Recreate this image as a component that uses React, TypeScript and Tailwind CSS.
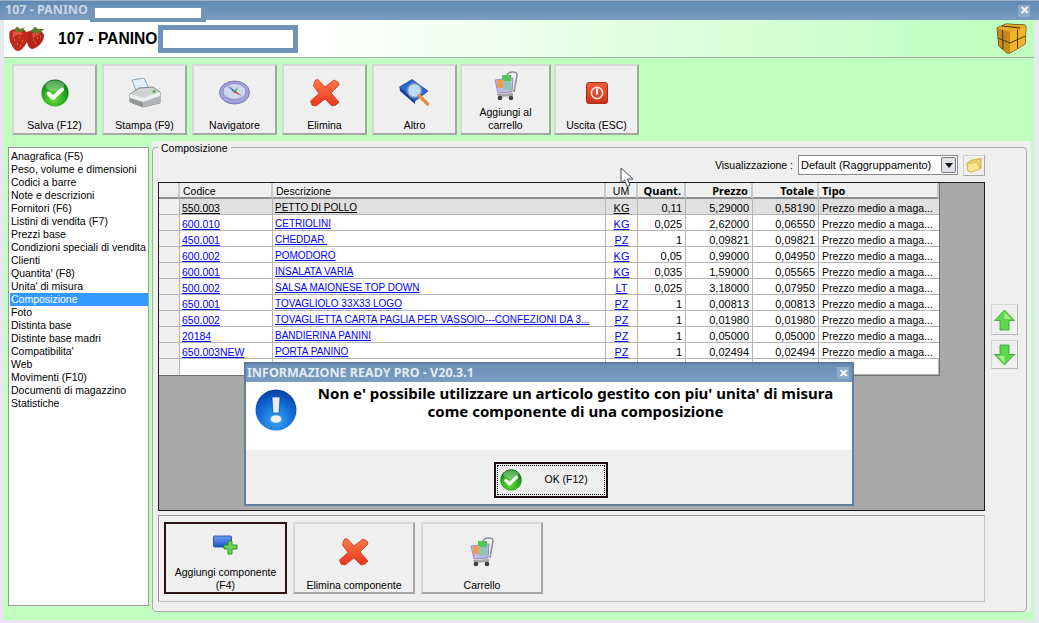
import type { ReactNode } from 'react';

const FONT = "font-['Liberation_Sans',sans-serif]";
const BOLD = "font-['Noto_Sans',sans-serif] font-bold";

/* ── Icons ─────────────────────────────────────────────── */
function CheckIcon({ size = 28, id = 'chk' }: { size?: number; id?: string }) {
  return (
    <svg width={size} height={size} viewBox="0 0 28 28">
      <defs>
        <radialGradient id={id} cx="45%" cy="70%" r="70%">
          <stop offset="0" stopColor="#6fe03c" />
          <stop offset="0.6" stopColor="#27a81e" />
          <stop offset="1" stopColor="#0b6e12" />
        </radialGradient>
      </defs>
      <circle cx="14" cy="14" r="13.6" fill={`url(#${id})`} />
      <ellipse cx="14" cy="7" rx="9.5" ry="5.5" fill="#fff" opacity="0.3" />
      <path d="M7.5 14.5 L12 19 L21 10.5" fill="none" stroke="#fff" strokeWidth="4" strokeLinecap="round" strokeLinejoin="round" />
    </svg>
  );
}

function CrossIcon() {
  return (
    <svg width="30" height="28" viewBox="0 0 30 28">
      <defs>
        <linearGradient id="crs" x1="0" y1="0" x2="0" y2="1">
          <stop offset="0" stopColor="#ff7a4a" />
          <stop offset="1" stopColor="#e8341a" />
        </linearGradient>
      </defs>
      <path d="M5 1.5 L8 0.5 L15 8 L24 1 L28 3 L29 6 L21 14 L29 23 L26 26 L22 27 L15 20 L6 27 L2 26 L0.5 22 L9 14.5 L3.5 7 Z" fill="url(#crs)" stroke="#c9361c" strokeWidth="0.8" strokeLinejoin="round" />
    </svg>
  );
}

function PrinterIcon() {
  return (
    <svg width="32" height="30" viewBox="0 0 32 30">
      <path d="M3 2 L15 0 L21 13 L8 15 Z" fill="#dfeefb" stroke="#7f8d9c" strokeWidth="0.8" />
      <path d="M1 16 L10 10 L24 9 L31 14 L31 25 L14 29 L1 24 Z" fill="#cfd1d2" stroke="#6e7174" strokeWidth="0.8" />
      <path d="M1 16 L14 20 L31 14 L31 18 L14 24 L1 20 Z" fill="#eef0f0" />
      <path d="M1 20 L14 24 L14 29 L1 24 Z" fill="#96999c" />
      <path d="M14 24 L31 18 L31 25 L14 29 Z" fill="#b2b5b7" />
      <circle cx="25" cy="13.5" r="1.4" fill="#4cb83a" />
    </svg>
  );
}

function CompassIcon() {
  return (
    <svg width="31" height="25" viewBox="0 0 31 25">
      <ellipse cx="15.5" cy="12.5" rx="15" ry="11.5" fill="#a4a2dc" stroke="#6c6ca4" strokeWidth="0.8" />
      <ellipse cx="15.5" cy="11.5" rx="11.5" ry="8" fill="#cfd7ef" stroke="#7d7db3" strokeWidth="0.8" />
      <path d="M8 5 L16 10.5 L14 12 Z" fill="#3f7fc9" />
      <path d="M16 10.5 L23 16 L14 12 Z" fill="#d83b2a" />
      <path d="M14 12 L19 7 L17 12 Z" fill="#4aa84a" />
    </svg>
  );
}

function BookIcon() {
  return (
    <svg width="32" height="28" viewBox="0 0 32 28">
      <path d="M0.5 8 L13 0.5 L29 12 L16 22 Z" fill="#2b67d8" stroke="#163f94" strokeWidth="0.7" />
      <path d="M0.5 8 L16 22 L16 25 L1 12 Z" fill="#123f9e" />
      <circle cx="15.5" cy="11.5" r="7" fill="#bcdcf5" stroke="#7d93ad" strokeWidth="1.6" />
      <path d="M20 16.5 L28.5 25" stroke="#e8873d" strokeWidth="3.4" strokeLinecap="round" />
    </svg>
  );
}

function CartIcon() {
  return (
    <svg width="24" height="30" viewBox="0 0 24 30">
      <path d="M13 4 C15 0 23 0 23 4 L20 21" fill="none" stroke="#8e9598" strokeWidth="1.6" />
      <path d="M1 9 L19 7 L18 21 L4 22 Z" fill="#bdb8e6" stroke="#7f7fb0" strokeWidth="0.8" />
      <rect x="8" y="4" width="9" height="9" fill="#53c659" />
      <rect x="3" y="9" width="7" height="8" fill="#ef9a55" />
      <rect x="9" y="10" width="8" height="9" fill="#8fc7b7" />
      <path d="M3 23 L19 22 L19 25 L4 26 Z" fill="#a3a7a9" />
      <circle cx="6" cy="27" r="2.3" fill="#3f4244" />
      <circle cx="17" cy="27" r="2.3" fill="#3f4244" />
    </svg>
  );
}

function PowerIcon() {
  return (
    <svg width="22" height="22" viewBox="0 0 22 22">
      <defs>
        <linearGradient id="pwr" x1="0" y1="0" x2="0" y2="1">
          <stop offset="0" stopColor="#f0603a" />
          <stop offset="1" stopColor="#c8321a" />
        </linearGradient>
      </defs>
      <rect x="0.5" y="0.5" width="21" height="21" rx="2.5" fill="url(#pwr)" stroke="#b02a14" />
      <circle cx="11" cy="11" r="5.6" fill="none" stroke="#fbe3db" strokeWidth="1.6" />
      <rect x="10" y="6.5" width="2" height="6" fill="#fff" />
    </svg>
  );
}

function StrawberryIcon() {
  return (
    <svg width="37" height="25" viewBox="0 0 37 25">
      <path d="M19 6 C26 2 36 4 36 10 C36 17 27 23 24 23 C20 23 17 13 19 6 Z" fill="#b5241a" />
      <path d="M2 5 C8 1 19 2 20 9 C21 16 14 25 10 25 C5 25 -1 12 2 5 Z" fill="#c22a1c" />
      <path d="M5 6 C9 4 14 5 15 9 C11 8 7 9 5 12 Z" fill="#ee6a52" opacity="0.7" />
      <path d="M24 7 C27 6 31 6 33 9 C30 9 27 10 25 13 Z" fill="#e0604a" opacity="0.6" />
      <path d="M6 4 L9 0.5 L12 3 L17 1.5 L14 6 L9 6 Z" fill="#5d7f2a" />
      <path d="M23 5 L27 0.5 L30 3 L36 3 L32 7 L26 7 Z" fill="#56802a" />
      <path d="M6 14h1M11 11h1M14 15h1M9 18h1M12 20h1M25 14h1M29 12h1M27 17h1M32 11h1" stroke="#f0b080" strokeWidth="1" />
    </svg>
  );
}

function CubeIcon() {
  return (
    <svg width="31" height="31" viewBox="0 0 31 31">
      <path d="M1 5 L10 1 L29 2 L30 4 L29 21 L14 30 L11 30 L3 23 Z" fill="#d99a18" stroke="#3d2a06" strokeWidth="1" strokeLinejoin="round" />
      <path d="M1 5 L10 1 L29 2 L30 4 L14 9 Z" fill="#e3a92a" />
      <path d="M14 9 L30 4 L29 21 L14 30 Z" fill="#f0b52c" />
      <path d="M1 5 L14 9 L14 30 L11 30 L3 23 Z" fill="#c98a12" />
      <path d="M2 15 L14 20 L29.5 13 M21.5 6.5 L21.5 25.5 M6.5 7 L7 26 M6 3 L24 5" fill="none" stroke="#4a3208" strokeWidth="1" />
    </svg>
  );
}

function FolderIcon() {
  return (
    <svg width="16" height="15" viewBox="0 0 16 15">
      <path d="M1 5 L6 2 L15 0.5 L15 10 L5 14 L2 13 Z" fill="#f0d267" stroke="#b89a37" strokeWidth="0.7" />
      <path d="M1 6 L11 4 L14 11 L5 14 L2 13 Z" fill="#fbe68f" stroke="#c2a440" strokeWidth="0.6" />
    </svg>
  );
}

function ArrowIcon({ down = false }: { down?: boolean }) {
  return (
    <svg width="21" height="22" viewBox="0 0 21 22" className={down ? 'rotate-180' : ''}>
      <path d="M10.5 1 L20.5 11.5 L15 11.5 L15 21 L6 21 L6 11.5 L0.5 11.5 Z" fill="#5ed84e" stroke="#2f9e2b" strokeWidth="0.8" strokeLinejoin="round" />
      <path d="M10.5 3 L17 10 L10.5 10 Z" fill="#a4f08c" />
    </svg>
  );
}

function InfoIcon() {
  return (
    <svg width="42" height="42" viewBox="0 0 42 42">
      <defs>
        <radialGradient id="inf" cx="50%" cy="75%" r="75%">
          <stop offset="0" stopColor="#38a6f5" />
          <stop offset="0.65" stopColor="#0f63d2" />
          <stop offset="1" stopColor="#0a3d9c" />
        </radialGradient>
      </defs>
      <circle cx="21" cy="21" r="20.5" fill="url(#inf)" />
      <path d="M17 8 L25 8 L24 24 L18 24 Z" fill="#e6eef7" stroke="#0a3d9c" strokeWidth="0.6" />
      <ellipse cx="21" cy="30" rx="5.5" ry="3.8" fill="#eef4fa" />
    </svg>
  );
}

function AddComponentIcon() {
  return (
    <svg width="25" height="20" viewBox="0 0 25 20">
      <defs>
        <linearGradient id="cmp" x1="0" y1="0" x2="0" y2="1">
          <stop offset="0" stopColor="#6d9df0" />
          <stop offset="1" stopColor="#1f55c8" />
        </linearGradient>
      </defs>
      <rect x="0.5" y="1" width="18" height="11" rx="1.2" fill="url(#cmp)" stroke="#153f9a" strokeWidth="0.8" />
      <path d="M15 6 L19 6 L19 10 L24 10 L24 14 L19 14 L19 19 L15 19 L15 14 L11 14 L11 10 L15 10 Z" fill="#6fd34f" stroke="#1f8a22" strokeWidth="0.9" />
    </svg>
  );
}

function CursorIcon() {
  return (
    <svg width="15" height="21" viewBox="0 0 15 21">
      <path d="M1 1 L1 16 L4.5 13 L7 19.5 L10 18.3 L7.5 12 L13 12 Z" fill="#fff" stroke="#3c4a58" strokeWidth="1" strokeLinejoin="round" />
    </svg>
  );
}

/* ── Pieces ────────────────────────────────────────────── */
function ToolButton({ label, icon, className, black = false, tight = false }: { label: ReactNode; icon: ReactNode; className: string; black?: boolean; tight?: boolean }) {
  return (
    <div
      className={`flex flex-col items-center border-2 bg-[#efefef] text-center text-[10.5px] leading-[13px] text-black ${tight ? '' : 'pb-[1px]'} ${
        black ? 'border-[#2a1414]' : 'border-t-[#d8d8d8] border-l-[#d8d8d8] border-r-[#a6a6a6] border-b-[#a6a6a6]'
      } ${className}`}
    >
      <div className="flex flex-1 items-center justify-center">{icon}</div>
      <div>{label}</div>
    </div>
  );
}

const menu = [
  'Anagrafica (F5)', 'Peso, volume e dimensioni', 'Codici a barre', 'Note e descrizioni', 'Fornitori (F6)',
  'Listini di vendita (F7)', 'Prezzi base', 'Condizioni speciali di vendita', 'Clienti', "Quantita' (F8)",
  "Unita' di misura", 'Composizione', 'Foto', 'Distinta base', 'Distinte base madri', "Compatibilita'",
  'Web', 'Movimenti (F10)', 'Documenti di magazzino', 'Statistiche',
];

const rows = [
  ['550.003', 'PETTO DI POLLO', 'KG', '0,11', '5,29000', '0,58190'],
  ['600.010', 'CETRIOLINI', 'KG', '0,025', '2,62000', '0,06550'],
  ['450.001', 'CHEDDAR ', 'PZ', '1', '0,09821', '0,09821'],
  ['600.002', 'POMODORO', 'KG', '0,05', '0,99000', '0,04950'],
  ['600.001', 'INSALATA VARIA', 'KG', '0,035', '1,59000', '0,05565'],
  ['500.002', 'SALSA MAIONESE TOP DOWN', 'LT', '0,025', '3,18000', '0,07950'],
  ['650.001', 'TOVAGLIOLO 33X33 LOGO', 'PZ', '1', '0,00813', '0,00813'],
  ['650.002', 'TOVAGLIETTA CARTA PAGLIA PER VASSOIO---CONFEZIONI DA 3...', 'PZ', '1', '0,01980', '0,01980'],
  ['20184', 'BANDIERINA PANINI', 'PZ', '1', '0,05000', '0,05000'],
  ['650.003NEW', 'PORTA PANINO', 'PZ', '1', '0,02494', '0,02494'],
];

const GRID_COLS = 'grid grid-cols-[21px_93px_333px_32px_48px_67px_66px_120px]';
const cell = 'flex h-[16px] items-center whitespace-nowrap border-r border-b border-[#b4b4b4] pl-[3px] pr-[3px] pt-[2px]';
const headCell = 'flex h-[16px] items-center whitespace-nowrap border-r-2 border-b-2 border-r-[#c8c8c8] border-b-[#8e8e8e] bg-[#efefef] pl-[3px] pr-[3px] pt-[1px]';

function DataGrid() {
  return (
    <div className="h-[329px] border border-[#1c1c1c] bg-[#a9a9a9]">
      <div className="w-[781px] border-r border-b border-[#6f6f6f] bg-white text-[11px] leading-[14px] text-black">
        <div className={GRID_COLS}>
          <div className={headCell} />
          <div className={`${headCell} pl-[2px] text-[10.5px]`}>Codice</div>
          <div className={`${headCell} pl-[2px] text-[10.5px]`}>Descrizione</div>
          <div className={`${headCell} justify-center !px-0 text-[10.5px]`}>UM</div>
          <div className={`${headCell} justify-end ${BOLD}`}>Quant.</div>
          <div className={`${headCell} justify-end ${BOLD}`}>Prezzo</div>
          <div className={`${headCell} justify-end ${BOLD}`}>Totale</div>
          <div className={`${headCell} border-r-0 ${BOLD}`}>Tipo</div>
        </div>
        {rows.map((r, i) => {
          const link = i === 0 ? 'text-black underline' : 'text-[#0000ff] underline';
          const bg = i === 0 ? 'bg-[#e0e0e0]' : 'bg-white';
          return (
            <div key={r[0]} className={GRID_COLS}>
              <div className={`${cell} bg-[#efefef]`} />
              <div className={`${cell} ${bg} ${link} !pl-[2px] text-[10.5px]`}>{r[0]}</div>
              <div className={`${cell} ${bg} !pl-[2px]`}>
                <span className={`${link} whitespace-pre text-[10px]`}>{r[1]}</span>
              </div>
              <div className={`${cell} ${bg} ${link} justify-center !px-0`}>{r[2]}</div>
              <div className={`${cell} ${bg} justify-end`}>{r[3]}</div>
              <div className={`${cell} ${bg} justify-end`}>{r[4]}</div>
              <div className={`${cell} ${bg} justify-end`}>{r[5]}</div>
              <div className={`${cell} ${bg} border-r-0 text-[10.5px]`}>Prezzo medio a maga...</div>
            </div>
          );
        })}
        <div className={GRID_COLS}>
          <div className={`${cell} border-b-0 bg-[#efefef]`} />
          <div className={`${cell} border-b-0`} />
          <div className={`${cell} border-b-0`} />
          <div className={`${cell} border-b-0`} />
          <div className={`${cell} border-b-0`} />
          <div className={`${cell} border-b-0`} />
          <div className={`${cell} border-b-0`} />
          <div className={`${cell} border-0`} />
        </div>
      </div>
    </div>
  );
}

function MessageDialog() {
  return (
    <div className="absolute left-[244px] top-[362px] flex h-[144px] w-[610px] flex-col border-2 border-[#5e7d9f] bg-[#efefef]">
      <div className="flex h-[18px] shrink-0 items-center justify-between bg-gradient-to-b from-[#6a8fb6] to-[#7c9dc2] pl-[1px] pr-[3px]">
        <span className={`text-[12.5px] leading-none text-[#e4ebf3] ${BOLD}`}>INFORMAZIONE READY PRO - V20.3.1</span>
        <span className="flex h-[12px] w-[12px] items-center justify-center bg-[#8eabc9] text-[11px] font-bold leading-none text-white">✕</span>
      </div>
      <div className="flex h-[68px] shrink-0 bg-white">
        <div className="pl-[9px] pt-[7px]">
          <InfoIcon />
        </div>
        <div className={`flex-1 pl-[15px] pr-[13px] pt-[2px] text-center text-[15px] leading-[18px] text-black ${BOLD}`}>
          <div>Non e' possibile utilizzare un articolo gestito con piu' unita' di misura</div>
          <div>come componente di una composizione</div>
        </div>
      </div>
      <div className="flex flex-1 justify-center pt-[12px]">
        <div className="ml-[3px] h-[36px] w-[114px] border-2 border-[#1f1010] p-[1px]">
          <div className="flex h-full items-center border border-dotted border-black pl-[2px] text-[10.5px] text-black">
            <CheckIcon size={22} id="chk-ok" />
            <span className="pl-[23px]">OK (F12)</span>
          </div>
        </div>
      </div>
    </div>
  );
}

/* ── App ───────────────────────────────────────────────── */
export default function App() {
  return (
    <div className={`relative h-[623px] w-[1039px] overflow-hidden bg-[#e6e9ee] ${FONT}`}>
      {/* title bar */}
      <div className="relative flex h-[20px] items-center justify-between border-t border-[#9db3cc] bg-gradient-to-b from-[#628ab0] to-[#7b9cc1] pl-[5px] pr-[9px]">
        <span className={`text-[12.5px] leading-none text-[#c9d6e6] ${BOLD}`}>107 - PANINO</span>
        <span className="flex h-[12px] w-[12px] items-center justify-center bg-[#8eabc9] text-[11px] font-bold leading-none text-white">✕</span>
        <div className="absolute left-[90px] top-[6px] h-[15px] w-[116px] bg-[#6f93b9] px-[5px] pt-[1px]">
          <div className="h-[10px] bg-white" />
        </div>
      </div>

      <div className="ml-[4px] flex h-[600px] w-[1030px] flex-col bg-[#c0ffc0]">
        {/* header strip */}
        <div className="flex h-[38px] shrink-0 items-center border-b border-[#a8b0a8] bg-gradient-to-r from-white from-30% to-[#c0ffc0] to-95% pl-[4px] pr-[7px]">
          <StrawberryIcon />
          <span className="ml-[13px] text-[15.6px] font-bold leading-none text-black">107 - PANINO</span>
          <div className="ml-[1px] h-[28px] w-[140px] border-[5px] border-[#6f93b9] bg-white" />
          <div className="ml-auto">
            <CubeIcon />
          </div>
        </div>

        {/* toolbar */}
        <div className="flex h-[83px] shrink-0 pl-[8px] pt-[6px]">
          <ToolButton className="h-[71px] w-[85px]" label="Salva (F12)" icon={<CheckIcon />} />
          <ToolButton className="ml-[5px] h-[71px] w-[85px]" label="Stampa (F9)" icon={<PrinterIcon />} />
          <ToolButton className="ml-[5px] h-[71px] w-[85px]" label="Navigatore" icon={<CompassIcon />} />
          <ToolButton className="ml-[5px] h-[71px] w-[85px]" label="Elimina" icon={<CrossIcon />} />
          <ToolButton className="ml-[5px] h-[71px] w-[85px]" label="Altro" icon={<BookIcon />} />
          <ToolButton
            className="ml-[3px] h-[71px] w-[91px]"
            label={<>Aggiungi al<br />carrello</>}
            icon={<CartIcon />}
          />
          <ToolButton className="ml-[3px] h-[71px] w-[85px]" label="Uscita (ESC)" icon={<PowerIcon />} />
        </div>

        <div className="flex flex-1 pb-[8px] pl-[4px] pr-[3px]">
          {/* section list */}
          <div className="mt-[6px] mb-[6px] w-[141px] shrink-0 border border-[#9a9a9a] bg-white pl-[1px] pt-[2px] text-[10.5px] leading-[13px] text-black">
            {menu.map((m) => (
              <div key={m} className={`whitespace-nowrap pl-[1px] ${m === 'Composizione' ? 'bg-[#3399ff] text-white' : ''}`}>
                {m}
              </div>
            ))}
          </div>

          {/* content panel */}
          <div className="ml-[3px] flex-1 bg-[#efefef] pt-[6px]">
            <div className="relative h-[465px] w-[875px] rounded-t-[4px] rounded-b-[4px] border border-[#a8a8a8] pl-[5px]">
              <span className="absolute left-[5px] top-[-6px] bg-[#efefef] px-[3px] text-[10.5px] leading-[13px] text-black">Composizione</span>
              <div className="flex h-[34px] items-start justify-end pr-[41px] pt-[7px] text-[10.5px] text-black">
                <span className="mr-[5px] leading-[20px]">Visualizzazione :</span>
                <div className="flex h-[20px] w-[160px] items-center justify-between border border-[#8a8a8a] bg-white pl-[2px] pr-[1px] leading-none">
                  <span className="text-[11px]">Default (Raggruppamento)</span>
                  <span className="flex h-[16px] w-[15px] items-center justify-center rounded-[2px] border border-[#7a7a7a] bg-[#dfe2e8]">
                    <svg width="8" height="5" viewBox="0 0 8 5">
                      <path d="M0 0 L8 0 L4 5 Z" fill="#111" />
                    </svg>
                  </span>
                </div>
                <div className="ml-[5px] flex h-[21px] w-[22px] items-center justify-center border border-[#cfcfcf] border-r-[#a8a8a8] border-b-[#a8a8a8]">
                  <FolderIcon />
                </div>
              </div>
              <div className="flex">
                <div className="w-[827px] shrink-0">
                  <DataGrid />
                </div>
                <div className="ml-[6px] mt-[122px] flex w-[27px] flex-col gap-[5px]">
                  <div className="flex h-[31px] items-center justify-center border border-[#d4d4d4] border-r-[#b8b8b8] border-b-[#b8b8b8]">
                    <ArrowIcon />
                  </div>
                  <div className="flex h-[29px] items-center justify-center border border-[#d4d4d4] border-r-[#b8b8b8] border-b-[#b8b8b8]">
                    <ArrowIcon down />
                  </div>
                </div>
              </div>

              {/* bottom actions */}
              <div className="mt-[4px] flex h-[87px] w-[827px] gap-[6px] border border-[#c4c4c4] border-l-[#9a9a9a] border-t-[#9a9a9a] pl-[5px] pt-[6px]">
                <ToolButton tight black className="h-[72px] w-[123px]" label={<>Aggiungi componente<br />(F4)</>} icon={<AddComponentIcon />} />
                <ToolButton tight className="h-[72px] w-[122px]" label="Elimina componente" icon={<CrossIcon />} />
                <ToolButton tight className="h-[72px] w-[122px]" label="Carrello" icon={<CartIcon />} />
              </div>
            </div>
          </div>
        </div>
      </div>

      <MessageDialog />

      <div className="absolute left-[620px] top-[167px]">
        <CursorIcon />
      </div>
    </div>
  );
}
